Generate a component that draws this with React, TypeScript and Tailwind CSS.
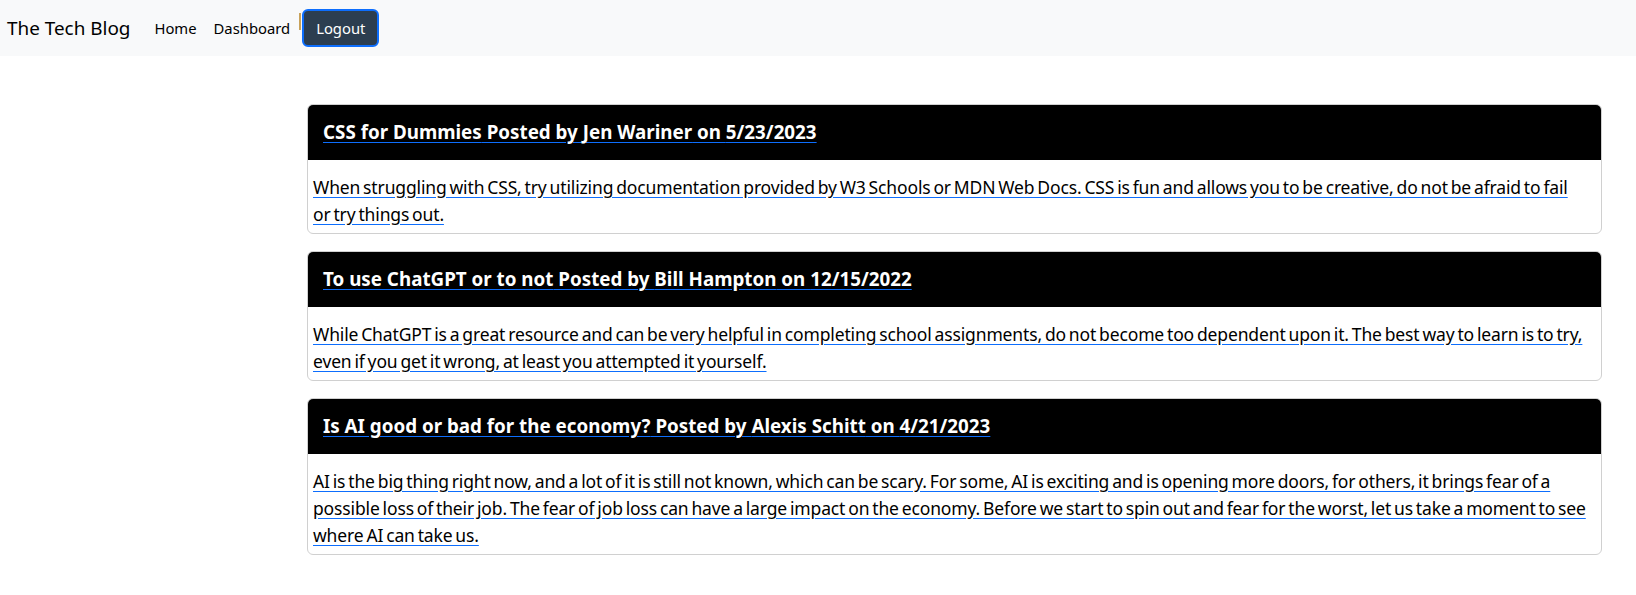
import React from 'react';

type Post = {
    title: string;
    author: string;
    date: string;
    body: string;
};

const posts: Post[] = [
    {
        title: 'CSS for Dummies',
        author: 'Jen Wariner',
        date: '5/23/2023',
        body: 'When struggling with CSS, try utilizing documentation provided by W3 Schools or MDN Web Docs. CSS is fun and allows you to be creative, do not be afraid to fail or try things out.',
    },
    {
        title: 'To use ChatGPT or to not',
        author: 'Bill Hampton',
        date: '12/15/2022',
        body: 'While ChatGPT is a great resource and can be very helpful in completing school assignments, do not become too dependent upon it. The best way to learn is to try, even if you get it wrong, at least you attempted it yourself.',
    },
    {
        title: 'Is AI good or bad for the economy?',
        author: 'Alexis Schitt',
        date: '4/21/2023',
        body: 'AI is the big thing right now, and a lot of it is still not known, which can be scary. For some, AI is exciting and is opening more doors, for others, it brings fear of a possible loss of their job. The fear of job loss can have a large impact on the economy. Before we start to spin out and fear for the worst, let us take a moment to see where AI can take us.',
    },
];

function PostCard({ post }: { post: Post }) {
    return (
        <div className="border border-[#d0d0d0] rounded-[6px] overflow-hidden bg-white">
            <div className="h-[55px] bg-black flex items-center px-[15px]">
                <a href="#" className="text-white font-bold text-[18.8px] underline decoration-[#0d6efd] underline-offset-[3px]">
                    {post.title} Posted by {post.author} on {post.date}
                </a>
            </div>
            <div className="pl-[5px] pr-[15px] pt-[14px] pb-[5px]">
                <a href="#" className="text-black text-[17.5px] tracking-[-0.14px] [word-spacing:-1.5px] leading-[27px] underline decoration-[#0d6efd] underline-offset-[3px]">
                    {post.body}
                </a>
            </div>
        </div>
    );
}

export default function App() {
    return (
        <div className="min-h-screen bg-white text-black" style={{ fontFamily: '"Noto Sans", sans-serif' }}>
            <nav className="h-[56px] bg-[#f8f9fa] flex items-center pl-[7px]">
                <span className="text-[18.9px] text-black mr-[24px]">The Tech Blog</span>
                <a href="#" className="text-[14.8px] text-black">Home</a>
                <a href="#" className="text-[14.8px] text-black ml-[17px]">Dashboard</a>
                <span className="w-[2px] h-[17px] bg-[#c8a25a] ml-[9px] self-start mt-[13px]"></span>
                <button className="ml-[1px] h-[38px] px-[12px] rounded-[6px] bg-[#2c3e50] border-2 border-[#0d6efd] text-white text-[14.8px]">
                    Logout
                </button>
            </nav>
            <main className="pl-[307px] pr-[34px] pt-[48px] flex flex-col gap-[17px]">
                {posts.map((post) => (
                    <PostCard key={post.title} post={post} />
                ))}
            </main>
        </div>
    );
}
